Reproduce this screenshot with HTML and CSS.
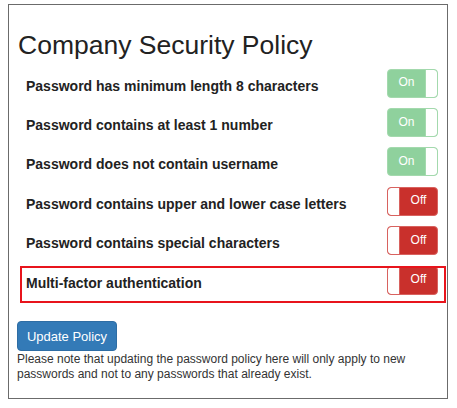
FILE: index.html
```html
<!DOCTYPE html>
<html>
<head>
<meta charset="utf-8">
<link rel="stylesheet" href="styles.css">
</head>
<body>
<div class="panel">
  <h1 class="title">Company Security Policy</h1>
  <div class="rows">
    <div class="row"><span class="label">Password has minimum length 8 characters</span><span class="toggle on"><span class="txt">On</span><span class="knob"></span></span></div>
    <div class="row"><span class="label">Password contains at least 1 number</span><span class="toggle on"><span class="txt">On</span><span class="knob"></span></span></div>
    <div class="row"><span class="label">Password does not contain username</span><span class="toggle on"><span class="txt">On</span><span class="knob"></span></span></div>
    <div class="row"><span class="label">Password contains upper and lower case letters</span><span class="toggle off"><span class="knob"></span><span class="txt">Off</span></span></div>
    <div class="row"><span class="label">Password contains special characters</span><span class="toggle off"><span class="knob"></span><span class="txt">Off</span></span></div>
    <div class="row highlight"><span class="label">Multi-factor authentication</span><span class="toggle off"><span class="knob"></span><span class="txt">Off</span></span></div>
  </div>
  <button class="btn">Update Policy</button>
  <p class="note">Please note that updating the password policy here will only apply to new passwords and not to any passwords that already exist.</p>
</div>
</body>
</html>
```
FILE: styles.css
```css
html, body {
  margin: 0;
  padding: 0;
  background: #fff;
}
body {
  font-family: "Liberation Sans", Arial, sans-serif;
  color: #333;
}
.panel {
  box-sizing: border-box;
  margin: 4px 0 0 8px;
  width: 440px;
  height: 395px;
  border: 1px solid #6b6b6b;
  padding: 0 0 0 8px;
}
.title {
  margin: 24px 0 0 1px;
  font-size: 26.5px;
  font-weight: normal;
  line-height: 33px;
  color: #222;
}
.rows {
  margin-top: 4px;
}
.row {
  position: relative;
  height: 39.4px;
  display: flex;
  align-items: center;
  justify-content: space-between;
  padding: 0 0 0 9px;
  margin-right: 1px;
}
.label {
  font-weight: bold;
  font-size: 14px;
  color: #222;
}
.toggle {
  box-sizing: border-box;
  display: flex;
  width: 51px;
  height: 29px;
  margin-right: 8px;
  margin-bottom: 5px;
  border-radius: 4px;
  overflow: hidden;
}
.toggle .txt {
  flex: 1;
  display: flex;
  align-items: center;
  justify-content: center;
  color: #fff;
  font-size: 12px;
  padding-bottom: 2px;
}
.toggle .knob {
  width: 12px;
  background: #fff;
  box-sizing: border-box;
}
.toggle.on {
  background: #8fd19d;
  border: 1px solid #a3d9ad;
}
.toggle.on .knob {
  border-left: 1px solid #a3d9ad;
  border-radius: 0 3px 3px 0;
}
.toggle.off {
  background: #c9302c;
  border: 1px solid #d8625f;
}
.toggle.off .knob {
  border-right: 1px solid #d8625f;
  border-radius: 3px 0 0 3px;
}
.highlight::after {
  content: "";
  position: absolute;
  left: 3px;
  right: 0;
  top: 3.5px;
  bottom: -1px;
  border: 2px solid #e8141c;
  pointer-events: none;
}
.btn {
  display: block;
  margin: 19px 0 0 0;
  width: 100px;
  height: 30px;
  background: #337ab7;
  border: 1px solid #2e6da4;
  border-radius: 4px;
  color: #fff;
  font-family: "Liberation Sans", Arial, sans-serif;
  font-size: 13px;
  padding: 0;
}
.note {
  margin: 1px 0 0 0;
  font-size: 12px;
  line-height: 15px;
  color: #333;
}
```
